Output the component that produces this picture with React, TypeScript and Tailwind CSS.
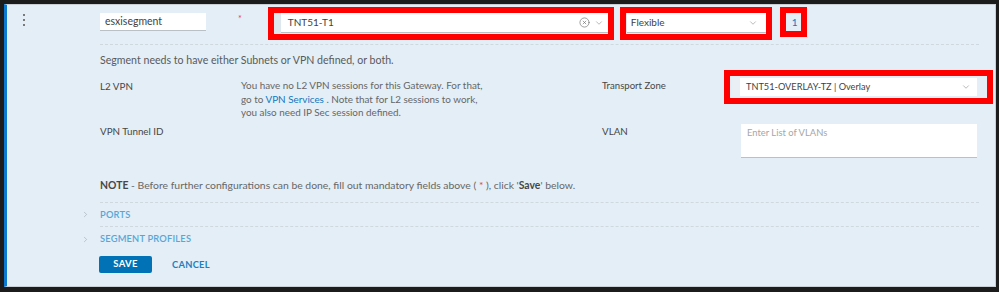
import { ChevronDown, ChevronRight, CircleX } from 'lucide-react';

const font = { fontFamily: 'Lato, "Open Sans", sans-serif' };

const Kebab = () => (
  <div className="flex flex-col gap-[3px] ml-[16px] mt-[8px]">
    <span className="block w-[2px] h-[2px] bg-[#7a7a7a]" />
    <span className="block w-[2px] h-[2px] bg-[#7a7a7a]" />
    <span className="block w-[2px] h-[2px] bg-[#7a7a7a]" />
  </div>
);

const Dashed = () => <div className="ml-[93px] mr-[16px] border-t border-dashed border-[#cfd8df]" />;

export default function App() {
  return (
    <div className="w-[999px] h-[292px] bg-[#1c1c1c] pt-[4px] pl-[4px] pr-[3px]" style={font}>
      <div className="h-[283px] bg-[#e3eef6] border border-[#c9cfd4] border-l-[3px] border-l-[#0b79d0] text-[10.5px] text-[#5a5a5a]">
        {/* Top row */}
        <div className="flex items-start h-[35px]">
          <div className="w-[93px] pt-[1px]">
            <Kebab />
          </div>
          <div className="mt-[8px] w-[106px] h-[18px] bg-white border-b border-[#b9c0c6] pl-[5px] flex items-center text-[#3f3f3f]">
            esxisegment
          </div>
          <span className="ml-[32px] mt-[7px] text-[#e04848] text-[9px]">*</span>
          <div className="ml-[26px] mt-[2px] w-[346px] h-[33px] border-[6px] border-[#ff0000] flex">
            <div className="w-[7px] bg-[#dfe7ee]" />
            <div className="flex-1 h-[20px] bg-white border-b border-[#b9c0c6] flex items-center pl-[7px] pr-[4px] text-[#3f3f3f] text-[10px]">
              <span className="flex-1">TNT51-T1</span>
              <CircleX size={11} strokeWidth={1.4} className="text-[#6b6b6b]" />
              <ChevronDown size={10} strokeWidth={1.4} className="ml-[4px] text-[#8a8a8a]" />
            </div>
          </div>
          <div className="ml-[6px] mt-[2px] w-[152px] h-[33px] border-[6px] border-[#ff0000] flex">
            <div className="w-[1px] bg-[#dfe7ee]" />
            <div className="flex-1 h-[20px] bg-white border-b border-[#b9c0c6] flex items-center pl-[4px] pr-[8px] text-[#3f3f3f] text-[10px]">
              <span className="flex-1">Flexible</span>
              <ChevronDown size={10} strokeWidth={1.4} className="text-[#8a8a8a]" />
            </div>
          </div>
          <div className="ml-[8px] mt-[2px] w-[27px] h-[30px] border-[6px] border-[#ff0000] flex items-center pl-[6px] text-[#1477c0] text-[10px]">
            1
          </div>
        </div>

        <div className="mt-[4px]">
          <Dashed />
        </div>

        <div className="ml-[93px] mt-[8px] leading-[14px] text-[10.6px]">
          Segment needs to have either Subnets or VPN defined, or both.
        </div>

        {/* L2 VPN / Transport zone */}
        <div className="flex mt-[3px] h-[50px]">
          <div className="w-[93px] shrink-0" />
          <div className="w-[141px] shrink-0 pt-[9px] leading-[14px] text-[#474747] text-[9.8px]">L2 VPN</div>
          <div className="w-[361px] shrink-0 pt-[9px] leading-[13.5px] text-[9.9px] text-[#666]">
            You have no L2 VPN sessions for this Gateway. For that,
            <br />
            go to <span className="text-[#1477c0]">VPN Services</span> . Note that for L2 sessions to work,
            <br />
            you also need IP Sec session defined.
          </div>
          <div className="w-[122px] shrink-0 pt-[9px] leading-[14px] text-[#474747] text-[9.6px]">Transport Zone</div>
          <div className="w-[269px] shrink-0 h-[34px] border-[6px] border-[#ff0000] p-[2px] pr-[10px] flex">
            <div className="w-[8px] bg-[#e9eff4]" />
            <div className="flex-1 h-[18px] bg-white flex items-center pl-[6px] pr-[6px] text-[#3f3f3f] text-[9.2px]">
              <span className="flex-1">TNT51-OVERLAY-TZ | Overlay</span>
              <ChevronDown size={10} strokeWidth={1.4} className="text-[#8a8a8a]" />
            </div>
          </div>
        </div>

        {/* VPN Tunnel ID / VLAN */}
        <div className="flex mt-[4px] h-[34px]">
          <div className="w-[93px] shrink-0" />
          <div className="w-[502px] shrink-0 leading-[14px] text-[#474747] text-[9.8px]">VPN Tunnel ID</div>
          <div className="w-[139px] shrink-0 leading-[14px] text-[#474747] text-[9.8px]">VLAN</div>
          <div className="w-[236px] shrink-0 h-[34px] bg-white border-b border-[#b9c0c6] pl-[6px] pt-[2px] text-[#a6a6a6] text-[9.4px]">
            Enter List of VLANs
          </div>
        </div>

        <div className="ml-[93px] mt-[20px] leading-[14px] text-[10.4px] text-[#666]">
          <span className="font-bold text-[#474747]">NOTE</span> - Before further configurations can be done, fill out mandatory fields above ({' '}
          <span className="text-[#e04848]">*</span> ), click '<span className="font-bold text-[#474747]">Save</span>' below.
        </div>

        <div className="mt-[10px]">
          <Dashed />
        </div>
        <div className="flex items-center h-[23px]">
          <div className="w-[93px] flex justify-end pr-[10px]">
            <ChevronRight size={9} strokeWidth={1.5} className="text-[#9aa3aa]" />
          </div>
          <span className="text-[#58a6d6] text-[9.3px] font-semibold tracking-[0.2px]">PORTS</span>
        </div>
        <Dashed />
        <div className="flex items-center h-[24px]">
          <div className="w-[93px] flex justify-end pr-[10px]">
            <ChevronRight size={9} strokeWidth={1.5} className="text-[#9aa3aa]" />
          </div>
          <span className="text-[#58a6d6] text-[9.3px] font-semibold tracking-[0.2px]">SEGMENT PROFILES</span>
        </div>

        <div className="flex items-center mt-[5px] ml-[92px]">
          <button className="w-[53px] h-[17px] bg-[#0072b5] rounded-[2px] text-white text-[9.5px] font-bold tracking-[0.3px] flex items-center justify-center">
            SAVE
          </button>
          <button className="ml-[20px] text-[#1c7fc0] text-[9.3px] font-bold tracking-[0.3px]">CANCEL</button>
        </div>
      </div>
    </div>
  );
}
